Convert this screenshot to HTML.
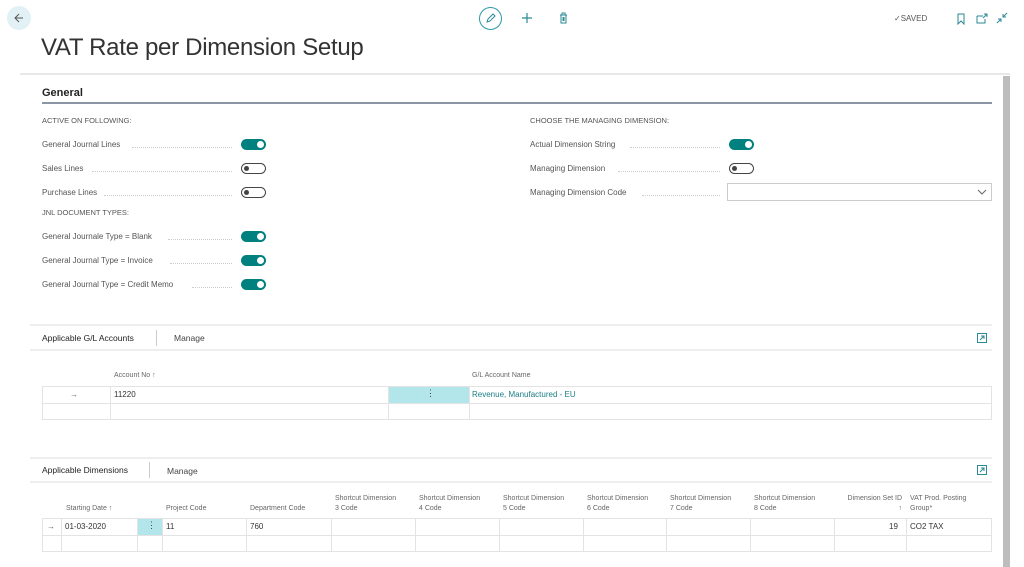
<!DOCTYPE html>
<html><head><meta charset="utf-8"><style>
*{margin:0;padding:0;box-sizing:border-box}
body{width:1024px;height:567px;overflow:hidden;background:#fff;font-family:"Liberation Sans",sans-serif;color:#333;position:relative}
.a{position:absolute;white-space:nowrap}
.s{font-size:8px;color:#505050}
.lab{font-size:8px;color:#555}
.dots{position:absolute;border-bottom:1px dotted #ccc;height:0}
.tg{position:absolute;width:25px;height:11px;border-radius:6px}
.on{background:#00807f}
.on::after{content:"";position:absolute;right:2px;top:2px;width:7px;height:7px;border-radius:50%;background:#fff}
.off{border:1.5px solid #444;background:#fff}
.off::after{content:"";position:absolute;left:1.5px;top:1.5px;width:5px;height:5px;border-radius:50%;background:#444}
.hl{position:absolute;height:1px;background:#e3e3e3}
.vl{position:absolute;width:1px;background:#e3e3e3}
.h{font-size:7px;color:#666;line-height:10px}
.c{font-size:8px;color:#333}
</style></head><body>
<div class="a" style="left:7px;top:6px;width:24px;height:24px;border-radius:50%;background:#e2f1f5"></div>
<svg class="a" style="left:12px;top:11px" width="14" height="14"><path d="M11 7H3M7 3L3 7l4 4" stroke="#555" fill="none" stroke-width="1"/></svg>
<div class="a" style="left:479px;top:7px;width:23px;height:23px;border-radius:50%;border:1.3px solid #2a9aa6"></div>
<svg class="a" style="left:484px;top:12px" width="13" height="13"><path d="M3 10l1-3 5-5 2 2-5 5z" stroke="#2a8a96" fill="none" stroke-width="1"/></svg>
<svg class="a" style="left:521px;top:12px" width="12" height="12"><path d="M6 1v10M1 6h10" stroke="#2a8a96" stroke-width="1.2"/></svg>
<svg class="a" style="left:558px;top:12px" width="11" height="12"><path d="M2 3h7M4 3V1h3v2M3 3v8h5V3M5 5v4M6 5v4" stroke="#2a8a96" fill="none" stroke-width="1"/></svg>
<div class="a" style="left:894px;top:14px;font-size:8px;color:#555">✓SAVED</div>
<svg class="a" style="left:955px;top:13px" width="12" height="12"><path d="M3 1h6v10L6 8 3 11z" stroke="#2a8a96" fill="none"/></svg>
<svg class="a" style="left:976px;top:13px" width="12" height="12"><path d="M1 3h6M1 3v7h8V6M8 1l3 0v3M11 1L7 5" stroke="#2a8a96" fill="none"/></svg>
<svg class="a" style="left:996px;top:12px" width="12" height="12"><path d="M11 1L7 5M7 2v3h3M1 11l4-4M2 7h3v3" stroke="#2a8a96" fill="none"/></svg>
<div class="a" style="left:41px;top:34px;font-size:24px;color:#333;font-weight:300;letter-spacing:-0.3px">VAT Rate per Dimension Setup</div>
<div class="hl" style="left:20px;top:73px;width:990px;height:2px;background:#e8e8e8"></div>
<div class="a" style="left:1003px;top:76px;width:7px;height:491px;background:#bdbdbd"></div>
<div class="a" style="left:42px;top:87px;font-size:11px;font-weight:bold;color:#222">General</div>
<div class="hl" style="left:42px;top:102px;width:950px;height:2px;background:#8a95a5"></div>

<div class="a lab" style="left:42px;top:116px;font-size:7.5px">ACTIVE ON FOLLOWING:</div>
<div class="a lab" style="left:42px;top:140px">General Journal Lines</div><div class="dots" style="left:132px;width:100px;top:147px"></div><div class="tg on" style="left:241px;top:139px"></div>
<div class="a lab" style="left:42px;top:164px">Sales Lines</div><div class="dots" style="left:92px;width:140px;top:171px"></div><div class="tg off" style="left:241px;top:163px"></div>
<div class="a lab" style="left:42px;top:188px">Purchase Lines</div><div class="dots" style="left:104px;width:128px;top:195px"></div><div class="tg off" style="left:241px;top:187px"></div>
<div class="a lab" style="left:42px;top:208px;font-size:7.5px">JNL DOCUMENT TYPES:</div>
<div class="a lab" style="left:42px;top:232px">General Journale Type = Blank</div><div class="dots" style="left:168px;width:64px;top:239px"></div><div class="tg on" style="left:241px;top:231px"></div>
<div class="a lab" style="left:42px;top:256px">General Journal Type = Invoice</div><div class="dots" style="left:170px;width:62px;top:263px"></div><div class="tg on" style="left:241px;top:255px"></div>
<div class="a lab" style="left:42px;top:280px">General Journal Type = Credit Memo</div><div class="dots" style="left:192px;width:40px;top:287px"></div><div class="tg on" style="left:241px;top:279px"></div>

<div class="a lab" style="left:530px;top:116px;font-size:7.5px">CHOOSE THE MANAGING DIMENSION:</div>
<div class="a lab" style="left:530px;top:140px">Actual Dimension String</div><div class="dots" style="left:630px;width:90px;top:147px"></div><div class="tg on" style="left:729px;top:139px"></div>
<div class="a lab" style="left:530px;top:164px">Managing Dimension</div><div class="dots" style="left:618px;width:102px;top:171px"></div><div class="tg off" style="left:729px;top:163px"></div>
<div class="a lab" style="left:530px;top:188px">Managing Dimension Code</div><div class="dots" style="left:642px;width:78px;top:195px"></div>
<div class="a" style="left:727px;top:183px;width:265px;height:18px;border:1px solid #ccc"></div>
<svg class="a" style="left:977px;top:188px" width="10" height="8"><path d="M1 2l4 4 4-4" stroke="#666" fill="none"/></svg>

<div class="hl" style="left:30px;top:324px;width:962px;height:2px;background:#eee"></div>
<div class="a" style="left:42px;top:333px;font-size:8.5px;color:#222">Applicable G/L Accounts</div>
<div class="vl" style="left:156px;top:330px;height:16px;background:#ccc"></div>
<div class="a" style="left:174px;top:333px;font-size:8.5px;color:#444">Manage</div>
<svg class="a" style="left:977px;top:333px" width="10" height="10"><rect x="0.5" y="0.5" width="9" height="9" stroke="#2a8a96" fill="none"/><path d="M3 7l4-4M4 3h3v3" stroke="#2a8a96" fill="none"/></svg>
<div class="hl" style="left:30px;top:349px;width:962px;height:2px;background:#eee"></div>
<div class="a h" style="left:114px;top:371px">Account No ↑</div>
<div class="a h" style="left:472px;top:371px">G/L Account Name</div>
<div class="a" style="left:388px;top:387px;width:81px;height:16px;background:#b2e6ea"></div>
<div class="a" style="left:426px;top:388px;font-size:9px;color:#444">⋮</div>
<div class="hl" style="left:42px;top:386px;width:950px"></div>
<div class="hl" style="left:42px;top:403px;width:950px"></div>
<div class="hl" style="left:42px;top:419px;width:950px"></div>
<div class="vl" style="left:42px;top:386px;height:34px"></div>
<div class="vl" style="left:110px;top:386px;height:34px"></div>
<div class="vl" style="left:388px;top:386px;height:34px"></div>
<div class="vl" style="left:469px;top:386px;height:34px"></div>
<div class="vl" style="left:991px;top:386px;height:34px"></div>
<div class="a c" style="left:70px;top:390px;color:#666">→</div>
<div class="a c" style="left:114px;top:390px">11220</div>
<div class="a c" style="left:472px;top:390px;color:#1b7f86">Revenue, Manufactured - EU</div>

<div class="hl" style="left:30px;top:457px;width:962px;height:2px;background:#eee"></div>
<div class="a" style="left:42px;top:465px;font-size:8.5px;color:#222">Applicable Dimensions</div>
<div class="vl" style="left:149px;top:462px;height:16px;background:#ccc"></div>
<div class="a" style="left:167px;top:466px;font-size:8.5px;color:#444">Manage</div>
<svg class="a" style="left:977px;top:465px" width="10" height="10"><rect x="0.5" y="0.5" width="9" height="9" stroke="#2a8a96" fill="none"/><path d="M3 7l4-4M4 3h3v3" stroke="#2a8a96" fill="none"/></svg>
<div class="hl" style="left:30px;top:481px;width:962px;height:2px;background:#eee"></div>
<div class="a h" style="left:66px;top:504px">Starting Date ↑</div>
<div class="a h" style="left:166px;top:504px">Project Code</div>
<div class="a h" style="left:250px;top:504px">Department Code</div>
<div class="a h" style="left:335px;top:494px">Shortcut Dimension<br>3 Code</div>
<div class="a h" style="left:419px;top:494px">Shortcut Dimension<br>4 Code</div>
<div class="a h" style="left:503px;top:494px">Shortcut Dimension<br>5 Code</div>
<div class="a h" style="left:587px;top:494px">Shortcut Dimension<br>6 Code</div>
<div class="a h" style="left:670px;top:494px">Shortcut Dimension<br>7 Code</div>
<div class="a h" style="left:754px;top:494px">Shortcut Dimension<br>8 Code</div>
<div class="a h" style="left:838px;top:494px;text-align:right;width:64px">Dimension Set ID<br>↑</div>
<div class="a h" style="left:910px;top:494px">VAT Prod. Posting<br>Group*</div>
<div class="a" style="left:137px;top:519px;width:25px;height:16px;background:#b2e6ea"></div>
<div class="a" style="left:147px;top:520px;font-size:9px;color:#444">⋮</div>
<div class="hl" style="left:42px;top:518px;width:950px"></div>
<div class="hl" style="left:42px;top:535px;width:950px"></div>
<div class="hl" style="left:42px;top:551px;width:950px"></div>
<div class="vl" style="left:42px;top:518px;height:34px"></div>
<div class="vl" style="left:61px;top:518px;height:34px"></div>
<div class="vl" style="left:137px;top:518px;height:34px"></div>
<div class="vl" style="left:162px;top:518px;height:34px"></div>
<div class="vl" style="left:246px;top:518px;height:34px"></div>
<div class="vl" style="left:331px;top:518px;height:34px"></div>
<div class="vl" style="left:415px;top:518px;height:34px"></div>
<div class="vl" style="left:499px;top:518px;height:34px"></div>
<div class="vl" style="left:583px;top:518px;height:34px"></div>
<div class="vl" style="left:666px;top:518px;height:34px"></div>
<div class="vl" style="left:750px;top:518px;height:34px"></div>
<div class="vl" style="left:834px;top:518px;height:34px"></div>
<div class="vl" style="left:906px;top:518px;height:34px"></div>
<div class="vl" style="left:991px;top:518px;height:34px"></div>
<div class="a c" style="left:47px;top:522px;color:#666">→</div>
<div class="a c" style="left:65px;top:522px">01-03-2020</div>
<div class="a c" style="left:166px;top:522px">11</div>
<div class="a c" style="left:250px;top:522px">760</div>
<div class="a c" style="left:889px;top:522px">19</div>
<div class="a c" style="left:910px;top:522px">CO2 TAX</div>
</body></html>
